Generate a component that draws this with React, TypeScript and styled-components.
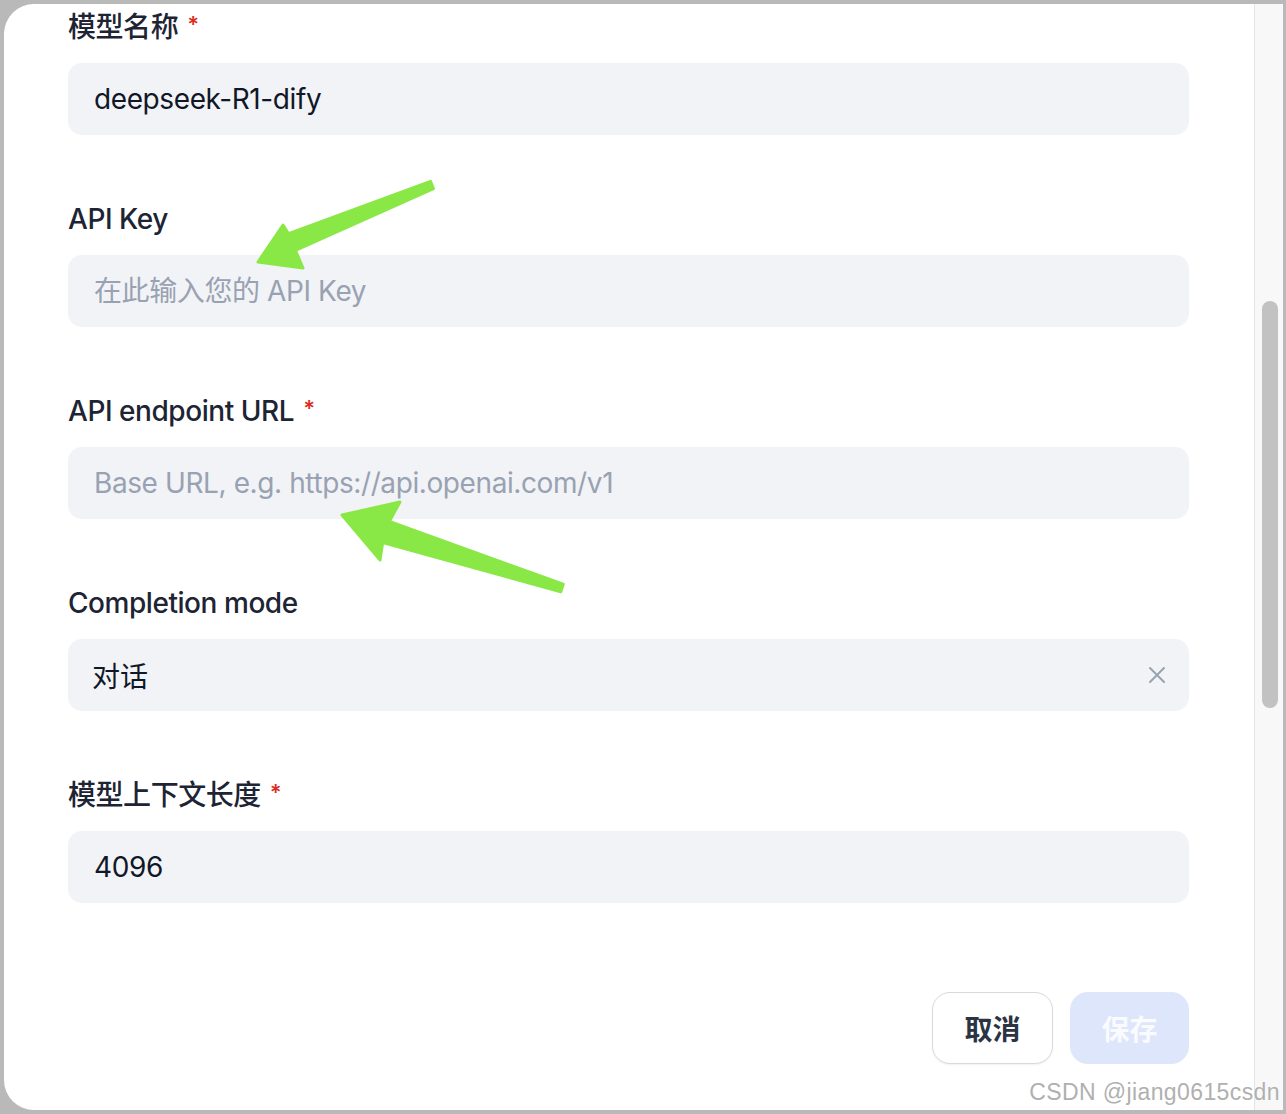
import React from "react";
import styled, { createGlobalStyle } from "styled-components";

const GlobalStyle = createGlobalStyle`
  html, body {
    margin: 0;
    padding: 0;
    background: #b9b9b9;
  }
  * {
    box-sizing: border-box;
  }
`;

const FONT = `Inter, "Noto Sans CJK SC", "Liberation Sans", sans-serif`;

const Page = styled.div`
  position: relative;
  width: 1286px;
  height: 1114px;
  padding: 4px 3px 4px 4px;
  display: flex;
  background: #b9b9b9;
  font-family: ${FONT};
  overflow: hidden;
`;

const Modal = styled.div`
  flex: 1;
  display: flex;
  background: #ffffff;
  border-radius: 30px 0 0 30px;
  overflow: hidden;
`;

const Body = styled.div`
  flex: 1;
  display: flex;
  flex-direction: column;
  padding: 3px 65px 0 64px;
`;

const Field = styled.div<{ $last?: boolean }>`
  display: flex;
  flex-direction: column;
  gap: 16px;
  margin-bottom: ${(p) => (p.$last ? "89px" : "64px")};
`;

const Label = styled.label`
  display: flex;
  align-items: center;
  gap: 9px;
  height: 40px;
  font-size: 28px;
  line-height: 40px;
  font-weight: 450;
  letter-spacing: -0.45px;
  color: #1d2433;
`;

const Required = styled.span`
  color: #d92d20;
  font-size: 22px;
  font-weight: 600;
  line-height: 1;
  margin-top: -6px;
`;

const TextInput = styled.input`
  height: 72px;
  width: 100%;
  border: none;
  outline: none;
  border-radius: 14px;
  background: #f2f3f6;
  padding: 0 26px;
  font-family: ${FONT};
  font-size: 28px;
  font-weight: 400;
  letter-spacing: -0.4px;
  color: #101828;

  &::placeholder {
    color: #98a2b2;
  }
`;

const SelectBox = styled.div`
  height: 72px;
  display: flex;
  align-items: center;
  justify-content: space-between;
  border-radius: 14px;
  background: #f2f3f6;
  padding: 0 23px 0 24px;
  font-size: 28px;
  color: #101828;
`;

const ClearIcon = styled.svg`
  width: 18px;
  height: 18px;
  stroke: #98a2b2;
  stroke-width: 2;
  stroke-linecap: round;
`;

const Footer = styled.div`
  display: flex;
  justify-content: flex-end;
  gap: 17px;
`;

const Button = styled.button<{ $primary?: boolean }>`
  height: 72px;
  min-width: ${(p) => (p.$primary ? "119px" : "121px")};
  padding: 0 30px;
  border-radius: 18px;
  font-family: ${FONT};
  font-size: 28px;
  font-weight: 700;
  border: ${(p) => (p.$primary ? "none" : "1.5px solid #d6d9df")};
  background: ${(p) => (p.$primary ? "#dee6fb" : "#ffffff")};
  color: ${(p) => (p.$primary ? "rgba(255,255,255,0.85)" : "#2b3442")};
  box-shadow: ${(p) => (p.$primary ? "none" : "0 1px 2px rgba(16,24,40,0.06)")};
`;

const ScrollTrack = styled.div`
  width: 29px;
  background: #f8f8f8;
  border-left: 1px solid #e4e4e4;
  padding: 297px 0 0 7px;
`;

const Thumb = styled.div<{ $height: number }>`
  width: 16px;
  height: ${(p) => p.$height}px;
  border-radius: 8px;
  background: #c2c2c2;
`;

const Watermark = styled.div`
  position: absolute;
  right: 6px;
  bottom: 8px;
  font-family: "Liberation Sans", Arial, sans-serif;
  font-size: 23px;
  letter-spacing: 0.4px;
  color: #b0b0b0;
  text-shadow: 0 0 2px #ffffff;
  pointer-events: none;
`;

const Overlay = styled.svg`
  position: absolute;
  left: 0;
  top: 0;
  pointer-events: none;
`;

const ARROW = "#89e846";

export default function App() {
  return (
    <>
      <GlobalStyle />
      <Page>
        <Modal>
          <Body>
            <Field>
              <Label>
                模型名称<Required>*</Required>
              </Label>
              <TextInput defaultValue="deepseek-R1-dify" readOnly />
            </Field>
            <Field>
              <Label>API Key</Label>
              <TextInput placeholder="在此输入您的 API Key" readOnly />
            </Field>
            <Field>
              <Label>
                API endpoint URL<Required>*</Required>
              </Label>
              <TextInput
                placeholder="Base URL, e.g. https://api.openai.com/v1"
                readOnly
              />
            </Field>
            <Field>
              <Label>Completion mode</Label>
              <SelectBox>
                <span>对话</span>
                <ClearIcon viewBox="0 0 18 18" fill="none">
                  <path d="M2 2L16 16M16 2L2 16" />
                </ClearIcon>
              </SelectBox>
            </Field>
            <Field $last>
              <Label>
                模型上下文长度<Required>*</Required>
              </Label>
              <TextInput defaultValue="4096" readOnly />
            </Field>
            <Footer>
              <Button>取消</Button>
              <Button $primary>保存</Button>
            </Footer>
          </Body>
          <ScrollTrack>
            <Thumb $height={407} />
          </ScrollTrack>
        </Modal>
        <Watermark>CSDN @jiang0615csdn</Watermark>
        <Overlay width="1286" height="1114" viewBox="0 0 1286 1114">
          <polygon
            points="258,262 283,225 288.6,233.7 430.5,181.3 433.5,188.7 295.4,250.3 303,268"
            fill={ARROW}
            stroke={ARROW}
            strokeWidth="3"
            strokeLinejoin="round"
          />
          <polygon
            points="342,515 400,502 389.3,521.5 563.2,584.2 560.8,591.8 382.7,542.5 380,560"
            fill={ARROW}
            stroke={ARROW}
            strokeWidth="3"
            strokeLinejoin="round"
          />
        </Overlay>
      </Page>
    </>
  );
}
